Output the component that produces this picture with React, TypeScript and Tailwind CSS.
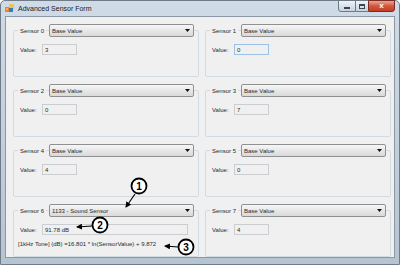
import React from "react";

type Sensor = {
  id: number;
  choice: string;
  value: string;
  wide?: boolean;
  focused?: boolean;
  formula?: string;
};

const sensors: Sensor[] = [
  { id: 0, choice: "Base Value", value: "3" },
  { id: 1, choice: "Base Value", value: "0", focused: true },
  { id: 2, choice: "Base Value", value: "0" },
  { id: 3, choice: "Base Value", value: "7" },
  { id: 4, choice: "Base Value", value: "4" },
  { id: 5, choice: "Base Value", value: "0" },
  {
    id: 6,
    choice: "1133 - Sound Sensor",
    value: "91.78 dB",
    wide: true,
    formula: "[1kHz Tone] (dB) =16.801 * ln(SensorValue) + 9.872",
  },
  { id: 7, choice: "Base Value", value: "4" },
];

function AppIcon() {
  return (
    <svg width="9" height="9" viewBox="0 0 9 9">
      <rect x="0" y="3" width="5" height="5" fill="#e8872a" />
      <rect x="4" y="0" width="5" height="5" fill="#f3c443" />
      <rect x="4" y="4" width="4" height="4" fill="#3a78c9" />
      <rect x="1" y="4" width="2" height="2" fill="#f7b55c" />
    </svg>
  );
}

function Combo({ text }: { text: string }) {
  return (
    <div className="flex-1 h-full flex items-center rounded-[2px] border border-[#8e9091] bg-gradient-to-b from-[#f6f6f6] to-[#dadada] pl-[2px] pr-[3px]">
      <span className="flex-1 truncate">{text}</span>
      <svg width="5" height="3" viewBox="0 0 5 3">
        <path d="M0 0 H5 L2.5 3 Z" fill="#111" />
      </svg>
    </div>
  );
}

function SensorGroup({ s }: { s: Sensor }) {
  return (
    <div className="mt-[6px] h-[47px] border border-[#d3dbe2] rounded-[2px]">
      <div className="-mt-[7px] h-[13px] flex items-center pl-[4px] pr-[4px]">
        <span className="w-[31px] shrink-0">
          <span className="bg-[#f0f0f0] px-[2px]">Sensor {s.id}</span>
        </span>
        <Combo text={s.choice} />
      </div>
      <div className="mt-[7px] h-[11px] flex items-center pl-[6px]">
        <span className="w-[22px] shrink-0">Value:</span>
        <div
          className={`h-full flex items-center pl-[2px] border bg-[#f0f0f0] ${
            s.wide ? "w-[146px]" : "w-[35px]"
          } ${s.focused ? "border-[#9cc0e6]" : "border-[#cbcdd0]"}`}
        >
          {s.value}
        </div>
      </div>
      {s.formula && (
        <div className="mt-[5px] h-[8px] flex items-center pl-[4px]">{s.formula}</div>
      )}
    </div>
  );
}

function Callouts() {
  const circles = [
    { n: "1", x: 138, y: 185 },
    { n: "2", x: 99, y: 224 },
    { n: "3", x: 185, y: 246 },
  ];
  const arrows = [
    { x1: 134, y1: 193, x2: 125, y2: 206 },
    { x1: 91, y1: 225, x2: 76, y2: 226 },
    { x1: 177, y1: 246, x2: 164, y2: 245 },
  ];
  return (
    <svg className="absolute left-0 top-0 pointer-events-none" width="400" height="265" viewBox="0 0 400 265">
      <defs>
        <marker id="head" markerWidth="6" markerHeight="6" refX="5" refY="3" orient="auto" markerUnits="userSpaceOnUse">
          <path d="M0 0 L6 3 L0 6 Z" fill="#000" />
        </marker>
      </defs>
      {arrows.map((a, i) => (
        <line key={i} x1={a.x1} y1={a.y1} x2={a.x2} y2={a.y2} stroke="#000" strokeWidth="1.2" markerEnd="url(#head)" />
      ))}
      {circles.map((c) => (
        <g key={c.n}>
          <circle cx={c.x} cy={c.y} r="7.5" fill="#fff" stroke="#000" strokeWidth="1.8" />
          <text
            x={c.x}
            y={c.y + 3.5}
            textAnchor="middle"
            fontSize="10"
            fontWeight="bold"
            fontFamily="'Liberation Sans', Arial, sans-serif"
            fill="#000"
          >
            {c.n}
          </text>
        </g>
      ))}
    </svg>
  );
}

export default function App() {
  return (
    <div
      className="relative w-[400px] h-[265px] flex flex-col bg-gradient-to-b from-[#cfdbe7] to-[#b6c4d2] border border-[#6f7b87] rounded-t-[5px] text-[#2a2a2a] text-[6px] leading-none"
      style={{ fontFamily: "'Liberation Sans', Arial, sans-serif" }}
    >
      <div className="h-[15px] flex items-start shrink-0">
        <div className="flex items-center h-[15px] pl-[4px] gap-[4px]">
          <AppIcon />
          <span className="text-[7px] text-[#1a1a1a]">Advanced Sensor Form</span>
        </div>
        <div className="ml-auto mr-[4px] flex h-[12px] -mt-[1px]">
          <div className="w-[18px] flex items-center justify-center border border-[#6c7a88] rounded-bl-[3px] bg-gradient-to-b from-[#eef3f8] to-[#c6d2de]">
            <div className="w-[6px] h-[2px] bg-[#3c4650] mt-[3px]" />
          </div>
          <div className="w-[12px] flex items-center justify-center border-y border-[#6c7a88] bg-gradient-to-b from-[#eef3f8] to-[#c6d2de]">
            <div className="w-[6px] h-[5px] border border-[#3c4650] border-t-2" />
          </div>
          <div className="w-[27px] flex items-center justify-center border border-[#7a2c22] rounded-br-[3px] bg-gradient-to-b from-[#e9a597] via-[#d2573f] to-[#c43c24] text-white text-[8px] font-bold">
            x
          </div>
        </div>
      </div>
      <div className="flex-1 mx-[4px] mb-[6px] bg-[#f0f0f0] border border-[#8b97a3] pl-[7px] pr-[3px] pt-[7px]">
        <div className="grid grid-cols-2 gap-x-[6px] gap-y-[7px]">
          {sensors.map((s) => (
            <SensorGroup key={s.id} s={s} />
          ))}
        </div>
      </div>
      <Callouts />
    </div>
  );
}
